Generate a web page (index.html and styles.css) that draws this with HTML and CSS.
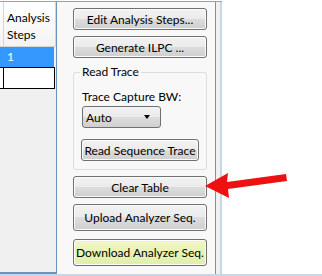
FILE: index.html
```html
<!DOCTYPE html>
<html>
<head>
<meta charset="utf-8">
<link rel="stylesheet" href="styles.css">
</head>
<body>
<div class="frame">
  <div class="main">
    <div class="grid">
      <div class="grid-head">
        <div class="corner"></div>
        <div class="col-head">Analysis Steps</div>
      </div>
      <div class="row sel">
        <div class="rh"></div>
        <div class="cell">1</div>
      </div>
      <div class="row new">
        <div class="rh"></div>
        <div class="cell"></div>
      </div>
      <div class="grid-fill"></div>
    </div>
    <div class="side">
      <button class="btn">Edit Analysis Steps...</button>
      <button class="btn">Generate ILPC ...</button>
      <fieldset class="group">
        <legend>Read Trace</legend>
        <div class="label">Trace Capture BW:</div>
        <div class="combo"><span>Auto</span><span class="tri"></span></div>
        <button class="btn small">Read Sequence Trace</button>
      </fieldset>
      <button class="btn">Clear Table</button>
      <button class="btn tall">Upload Analyzer Seq.</button>
      <button class="btn tall green">Download Analyzer Seq.</button>
    </div>
    <div class="edge"></div>
  </div>
  <div class="bottom"></div>
</div>
<svg class="arrow" width="322" height="276" viewBox="0 0 322 276">
  <polygon points="205,186 228,173 227,182 286,174 287,181 228,189 229,198" fill="#ee1111"/>
</svg>
</body>
</html>
```
FILE: styles.css
```css
html, body {
  margin: 0;
  padding: 0;
  background: #ffffff;
  font-family: "Lato", "Open Sans", sans-serif;
  font-size: 12px;
  color: #000;
}
.frame {
  width: 322px;
  height: 276px;
  display: flex;
  flex-direction: column;
  padding-top: 1px;
  box-sizing: border-box;
}
.main {
  display: flex;
  height: 272px;
  border-top: 1px solid #a0a0a0;
  width: 222px;
}
.grid {
  width: 57px;
  background: #f0f0f0;
  border-right: 1px solid #6d93b8;
  border-bottom: 2px solid #6d93b8;
  display: flex;
  flex-direction: column;
  box-sizing: border-box;
}
.grid-head {
  display: flex;
  height: 44px;
  background: linear-gradient(#ffffff, #f3f3f3);
  border-bottom: 1px solid #d5d5d5;
}
.corner {
  width: 3px;
  border-right: 1px solid #d5d5d5;
}
.col-head {
  padding: 7px 0 0 3px;
  line-height: 17px;
  border-right: 1px solid #d5d5d5;
  box-sizing: border-box;
  width: 52px;
}
.row {
  display: flex;
  height: 20px;
}
.rh {
  width: 3px;
}
.cell {
  width: 51px;
  padding-left: 3px;
  line-height: 20px;
  box-sizing: border-box;
}
.sel .rh, .sel .cell {
  background: #3399ff;
  color: #fff;
}
.sel .cell {
  border-left: 1px solid #3399ff;
}
.new {
  height: 22px;
  border-top: 1px solid #000;
  border-bottom: 1px solid #000;
  box-sizing: border-box;
  width: 55px;
  background: #fff;
}
.new .cell {
  border-left: 1px solid #000;
  border-right: 1px solid #000;
  width: 52px;
}
.grid-fill {
  flex: 1;
}
.side {
  width: 162px;
  background: #f8f8f8;
  display: flex;
  flex-direction: column;
  padding: 6px 0 0 16px;
  box-sizing: border-box;
  gap: 6px;
}
.btn {
  width: 134px;
  height: 22px;
  padding: 0;
  margin: 0;
  font: inherit;
  color: #000;
  border: 1px solid #707070;
  border-radius: 3px;
  background: linear-gradient(#f2f2f2 0%, #ebebeb 50%, #dddddd 50%, #cfcfcf 100%);
  box-shadow: inset 0 0 0 1px #fcfcfc;
}
.btn.tall {
  height: 27px;
}
.btn.green {
  background: linear-gradient(#f0f6c4, #e0efaa);
  margin-top: 2px;
}
.group {
  width: 134px;
  height: 106px;
  margin: 0;
  padding: 0 0 0 8px;
  border: 1px solid #dcdcdc;
  border-radius: 3px;
  box-sizing: border-box;
}
.group legend {
  padding: 0 2px;
  margin-left: -2px;
  line-height: 16px;
}
.label {
  margin-top: 9px;
  line-height: 16px;
}
.combo {
  width: 79px;
  height: 22px;
  margin-top: 1px;
  border: 1px solid #707070;
  border-radius: 3px;
  box-sizing: border-box;
  background: linear-gradient(#f2f2f2 0%, #ebebeb 50%, #dddddd 50%, #cfcfcf 100%);
  display: flex;
  align-items: center;
  justify-content: space-between;
  padding: 0 10px 0 3px;
}
.tri {
  width: 0;
  height: 0;
  border-left: 3.5px solid transparent;
  border-right: 3.5px solid transparent;
  border-top: 4px solid #000;
}
.btn.small {
  width: 118px;
  margin-top: 11px;
  margin-left: -1px;
}
.edge {
  width: 4px;
  border-left: 1px solid #8e8e8e;
  border-right: 2px solid #c4d8ec;
  background: #f0f0f0;
}
.bottom {
  height: 2px;
  background: #c4d8ec;
}
.arrow {
  position: absolute;
  left: 0;
  top: 0;
}
```
